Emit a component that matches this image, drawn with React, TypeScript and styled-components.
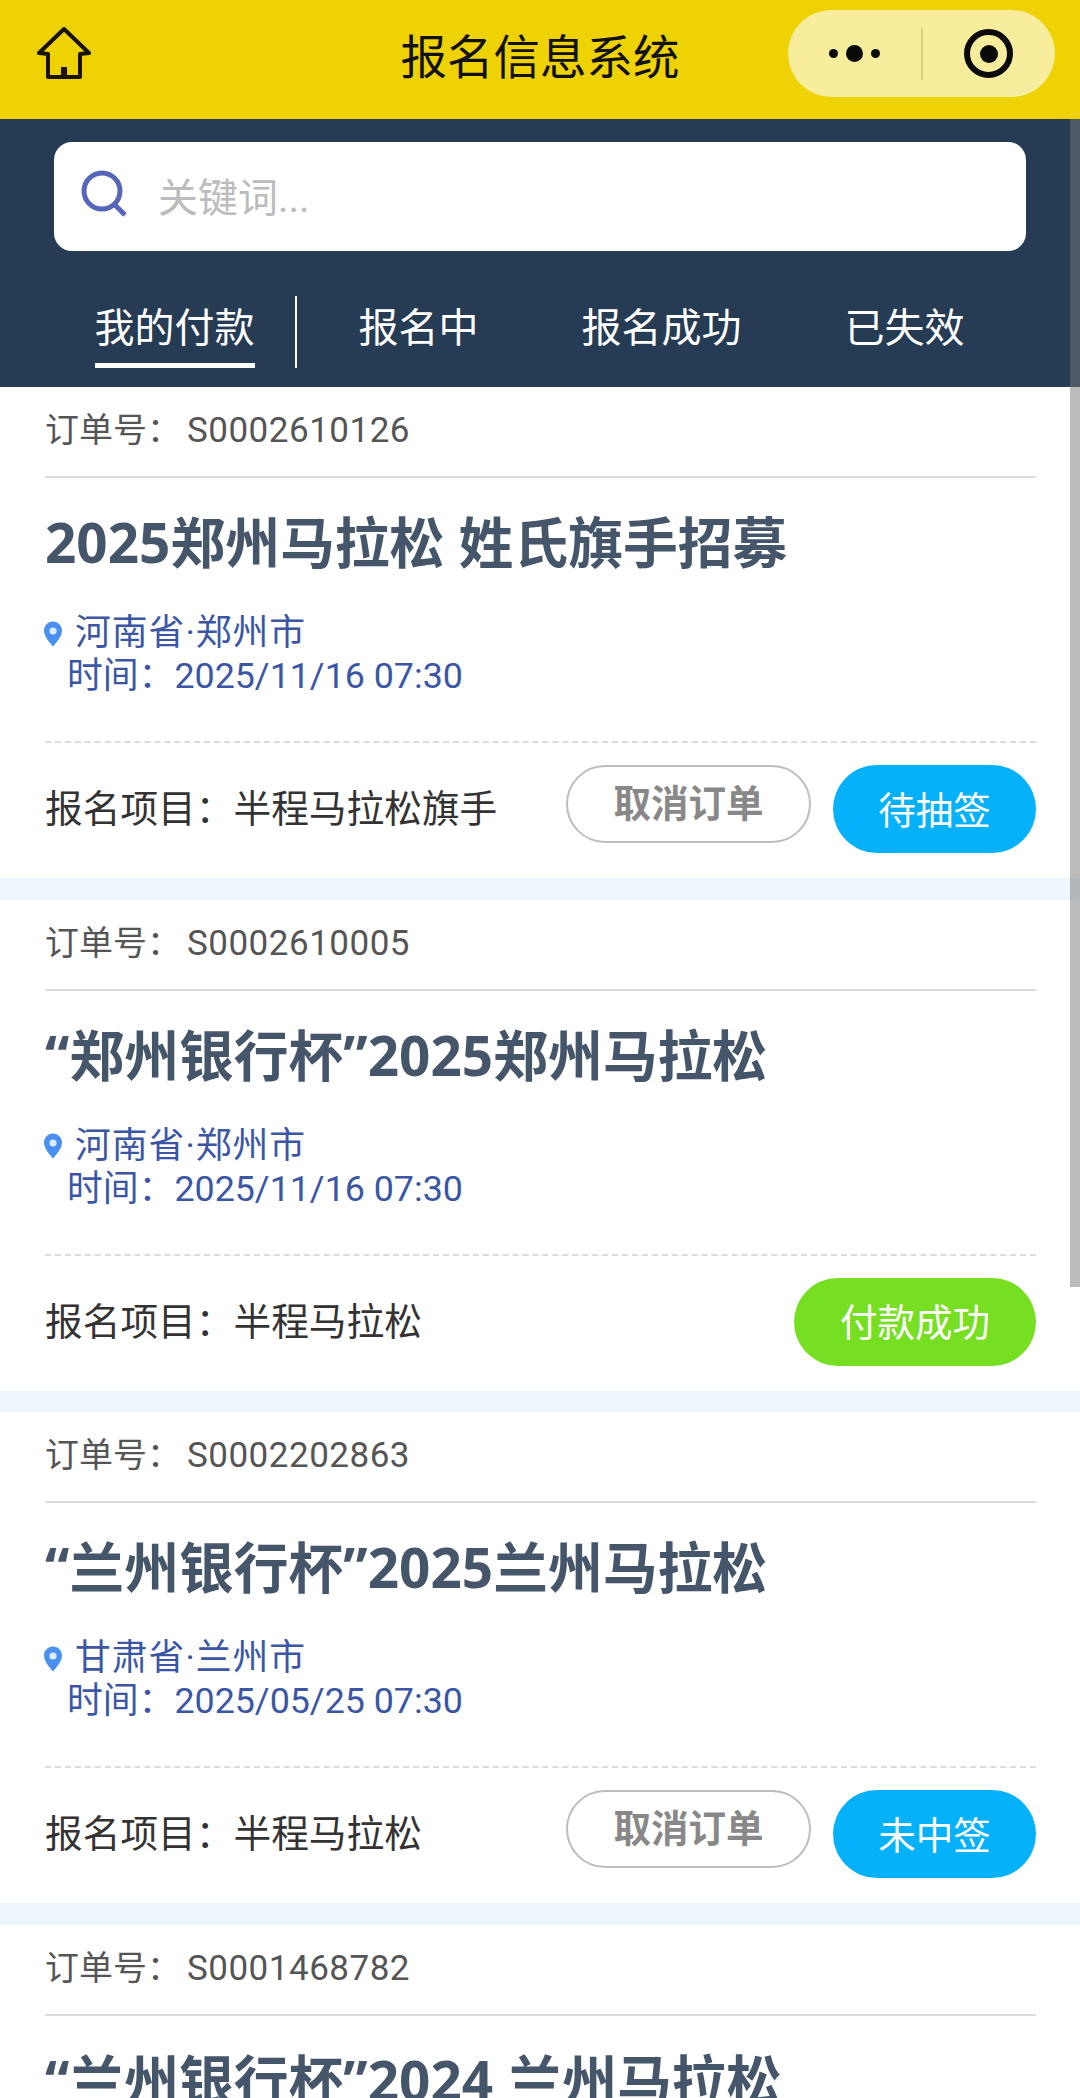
import React from 'react'
import styled, { createGlobalStyle } from 'styled-components'

const GlobalStyle = createGlobalStyle`
  html, body {
    margin: 0;
    padding: 0;
    background: #fff;
  }
  * {
    box-sizing: border-box;
  }
`

const Page = styled.div`
  position: relative;
  width: 1080px;
  height: 2098px;
  overflow: hidden;
  background: #eef6fd;
  font-family: Roboto, 'Noto Sans CJK SC', sans-serif;
`

const ScrollThumb = styled.div`
  position: absolute;
  top: 119px;
  right: 0;
  width: 10px;
  height: 1168px;
  background: rgba(120, 120, 120, 0.5);
`

const TopBar = styled.header`
  display: grid;
  grid-template-columns: 1fr auto 1fr;
  align-items: center;
  height: 119px;
  padding: 0 25px 12px;
  background: #efd204;
`

const HomeButton = styled.div`
  display: flex;
  margin-left: 12px;
`

const TopTitle = styled.h1`
  margin: 0;
  font-size: 46.5px;
  font-weight: 400;
  color: #111;
`

const Capsule = styled.div`
  justify-self: end;
  display: flex;
  align-items: center;
  width: 267px;
  height: 87px;
  border-radius: 44px;
  background: #f8ed9c;
`

const CapsuleSide = styled.div`
  flex: 1;
  display: flex;
  align-items: center;
  justify-content: center;
`

const CapsuleDivider = styled.div`
  width: 2px;
  height: 52px;
  background: #dccf7c;
`

const Dot = styled.span<{ $size: number }>`
  width: ${(p) => p.$size}px;
  height: ${(p) => p.$size}px;
  margin: 0 4px;
  border-radius: 50%;
  background: #0a0a0a;
`

const Target = styled.span`
  display: flex;
  align-items: center;
  justify-content: center;
  width: 49px;
  height: 49px;
  border: 6px solid #0a0a0a;
  border-radius: 50%;
  &::after {
    content: '';
    width: 18px;
    height: 18px;
    border-radius: 50%;
    background: #0a0a0a;
  }
`

const NavyPanel = styled.section`
  padding: 23px 54px 19px;
  background: #263b54;
`

const SearchBox = styled.div`
  display: flex;
  align-items: center;
  gap: 27px;
  height: 109px;
  padding: 0 0 4px 27px;
  border-radius: 18px;
  background: #fff;
`

const Placeholder = styled.span`
  font-size: 40px;
  color: #bcbcbc;
`

const Tabs = styled.nav`
  display: grid;
  grid-template-columns: repeat(4, 1fr);
  height: 72px;
  margin-top: 45px;
`

const Tab = styled.div<{ $active?: boolean }>`
  display: flex;
  justify-content: center;
  border-right: ${(p) => (p.$active ? '2px solid #fff' : 'none')};
`

const TabLabel = styled.span<{ $active?: boolean }>`
  height: 72px;
  font-size: 40px;
  line-height: 65px;
  color: #fff;
  border-bottom: ${(p) => (p.$active ? '5px solid #fff' : 'none')};
`

const CardList = styled.main`
  display: flex;
  flex-direction: column;
  gap: 21.6px;
`

const Card = styled.article`
  height: 491px;
  padding: 0 44px 0 45px;
  background: #fff;
`

const OrderRow = styled.div`
  height: 91px;
  padding-top: 19px;
  font-size: 34px;
  line-height: 48px;
  color: #555;
  border-bottom: 2px solid #dcdcdc;
`

const OrderNo = styled.span`
  margin-left: 6px;
  font-size: 35px;
  letter-spacing: 0.5px;
`

const EventTitle = styled.h2`
  height: 132px;
  margin: 0;
  padding-top: 28px;
  font-family: 'Noto Sans', 'Noto Sans CJK SC', sans-serif;
  font-size: 54.8px;
  font-weight: 700;
  line-height: 72px;
  color: #46566a;
  white-space: nowrap;
`

const InfoBlock = styled.div`
  height: 133px;
  padding-top: 2px;
  font-size: 35.8px;
  line-height: 43px;
  color: #3b56a5;
  border-bottom: 2px dashed #dcdcdc;
`

const PlaceRow = styled.div`
  display: flex;
  align-items: center;
  gap: 13px;
  margin-left: -1px;
  letter-spacing: 1px;
`

const TimeRow = styled.div`
  margin-left: 22px;
`

const FooterRow = styled.div`
  display: flex;
  align-items: flex-start;
  justify-content: space-between;
  padding-top: 22px;
`

const ProjectLabel = styled.span`
  font-size: 37.7px;
  line-height: 88px;
  color: #333;
`

const Actions = styled.div`
  display: flex;
  align-items: flex-start;
  gap: 22px;
`

const CancelButton = styled.div`
  display: flex;
  align-items: center;
  justify-content: center;
  width: 245px;
  height: 78px;
  padding-bottom: 8px;
  border: 2px solid #bdbdbd;
  border-radius: 39px;
  font-size: 37.5px;
  font-weight: 700;
  color: #888;
`

const StatusBadge = styled.div<{ $tone: string; $wide?: boolean }>`
  display: flex;
  align-items: center;
  justify-content: center;
  width: ${(p) => (p.$wide ? 242 : 203)}px;
  height: 88px;
  padding-bottom: 4px;
  border-radius: 44px;
  font-size: 37.5px;
  color: #fff;
  background: ${(p) => p.$tone};
`

const HomeIcon = () => (
  <svg width="54" height="53" viewBox="0 0 54 53" fill="none">
    <path
      d="M27 2 L52 26 L43 27 L43 50 L11 50 L11 27 L2 26 Z"
      stroke="#1a1200"
      strokeWidth="4"
      strokeLinejoin="round"
    />
    <rect x="24" y="40" width="6" height="10" fill="#1a1200" />
  </svg>
)

const SearchIcon = () => (
  <svg width="50" height="50" viewBox="0 0 50 50" fill="none">
    <circle cx="21" cy="21" r="18" stroke="#5566bb" strokeWidth="5" />
    <path d="M33 34 L44 45" stroke="#5566bb" strokeWidth="5" />
  </svg>
)

const PinIcon = () => (
  <svg width="18" height="26" viewBox="0 0 18 26">
    <path
      d="M9 0.5 C14 0.5 18 4.5 18 9.5 C18 15.5 12 22 9 25.5 C6 22 0 15.5 0 9.5 C0 4.5 4 0.5 9 0.5 Z"
      fill="#4a90f0"
    />
    <circle cx="9" cy="10" r="3.6" fill="#dcecff" />
  </svg>
)

const orders = [
  {
    no: 'S0002610126',
    title: '2025郑州马拉松 姓氏旗手招募',
    place: '河南省·郑州市',
    time: '2025/11/16 07:30',
    project: '半程马拉松旗手',
    status: '待抽签',
    tone: '#05b1fb',
    cancel: true,
  },
  {
    no: 'S0002610005',
    title: '“郑州银行杯”2025郑州马拉松',
    place: '河南省·郑州市',
    time: '2025/11/16 07:30',
    project: '半程马拉松',
    status: '付款成功',
    tone: '#76df22',
    cancel: false,
  },
  {
    no: 'S0002202863',
    title: '“兰州银行杯”2025兰州马拉松',
    place: '甘肃省·兰州市',
    time: '2025/05/25 07:30',
    project: '半程马拉松',
    status: '未中签',
    tone: '#05b1fb',
    cancel: true,
  },
  {
    no: 'S0001468782',
    title: '“兰州银行杯”2024 兰州马拉松',
    place: '甘肃省·兰州市',
    time: '2024/05/26 07:30',
    project: '半程马拉松',
    status: '未中签',
    tone: '#05b1fb',
    cancel: true,
  },
]

const tabs = ['我的付款', '报名中', '报名成功', '已失效']

export default function App() {
  return (
    <Page>
      <GlobalStyle />
      <TopBar>
        <HomeButton>
          <HomeIcon />
        </HomeButton>
        <TopTitle>报名信息系统</TopTitle>
        <Capsule>
          <CapsuleSide>
            <Dot $size={9} />
            <Dot $size={17} />
            <Dot $size={9} />
          </CapsuleSide>
          <CapsuleDivider />
          <CapsuleSide>
            <Target />
          </CapsuleSide>
        </Capsule>
      </TopBar>
      <NavyPanel>
        <SearchBox>
          <SearchIcon />
          <Placeholder>关键词...</Placeholder>
        </SearchBox>
        <Tabs>
          {tabs.map((tab, i) => (
            <Tab key={tab} $active={i === 0}>
              <TabLabel $active={i === 0}>{tab}</TabLabel>
            </Tab>
          ))}
        </Tabs>
      </NavyPanel>
      <CardList>
        {orders.map((order) => (
          <Card key={order.no}>
            <OrderRow>
              订单号：<OrderNo>{order.no}</OrderNo>
            </OrderRow>
            <EventTitle>{order.title}</EventTitle>
            <InfoBlock>
              <PlaceRow>
                <PinIcon />
                {order.place}
              </PlaceRow>
              <TimeRow>时间：{order.time}</TimeRow>
            </InfoBlock>
            <FooterRow>
              <ProjectLabel>报名项目：{order.project}</ProjectLabel>
              <Actions>
                {order.cancel && <CancelButton>取消订单</CancelButton>}
                <StatusBadge $tone={order.tone} $wide={!order.cancel}>
                  {order.status}
                </StatusBadge>
              </Actions>
            </FooterRow>
          </Card>
        ))}
      </CardList>
      <ScrollThumb />
    </Page>
  )
}
